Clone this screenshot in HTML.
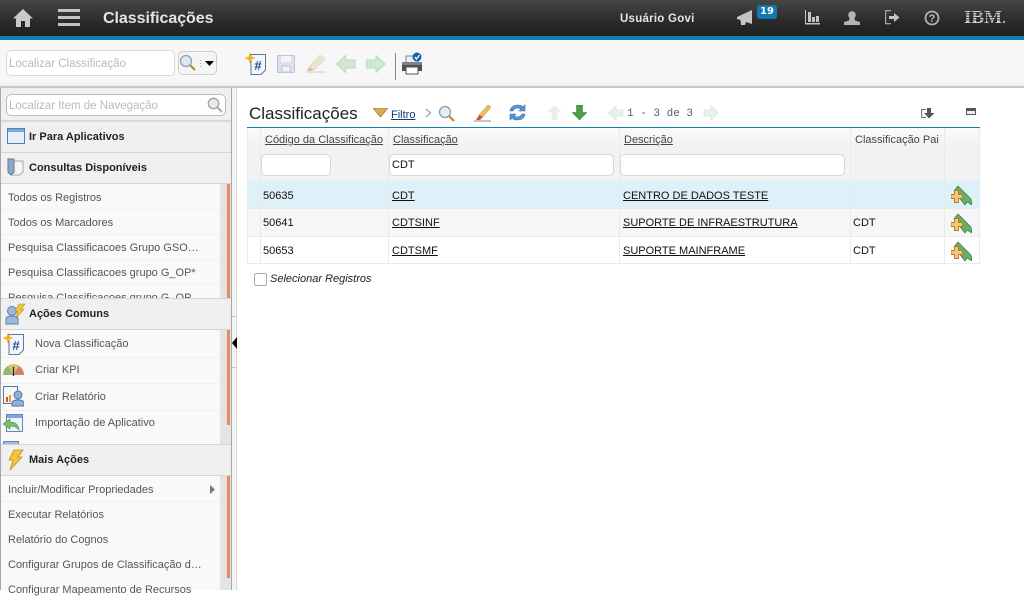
<!DOCTYPE html>
<html><head><meta charset="utf-8"><style>
html,body{margin:0;padding:0;width:1024px;height:590px;overflow:hidden;background:#fff;font-family:"Liberation Sans",sans-serif;font-size:11px;color:#333}
.a,.t,svg{position:absolute}
.t{white-space:nowrap;line-height:14px}
.nav{color:#555;left:8px;margin-top:1px}
.nav2{color:#555;left:35px;margin-top:1px}
.h{font-weight:bold;color:#222;left:29px;margin-top:1px}
.r{background:#eee;height:1px}
.d{color:#111;margin-top:1px}
.u{text-decoration:underline}
.th{color:#444;margin-top:1px}
.inp{background:#fff;border:1px solid #d8d8d8;border-radius:5px;box-sizing:border-box}
.v{background:#eaeaea;width:1px}
</style></head><body>
<svg width="0" height="0"><defs>
<g id="add"><path d="M3 6L7 1L20 14L21 20L16 17L14 20Z" fill="#6aae6a" stroke="#2f7a3a" stroke-width=".7"/><path d="M3.500 5.500h4v4h4v4h-4v4h-4v-4h-3.500v-4h3.500z" fill="#f5c878" stroke="#b8792a" stroke-width=".9"/></g>
</defs></svg>

<!-- header -->
<div class="a" style="left:0;top:0;width:1024px;height:36px;background:linear-gradient(#464646,#262626 70%,#222)"></div>
<div class="a" style="left:0;top:36px;width:1024px;height:4px;background:#0f7fb0"></div>
<svg style="left:13px;top:8px" width="20" height="20"><path d="M10 1L20 10.500H17V19H12V13H8V19H3V10.500H0Z" fill="#c9c9c9"/></svg>
<div class="a" style="left:58px;top:9px;width:22px;height:3px;background:#c4c4c4"></div>
<div class="a" style="left:58px;top:16px;width:22px;height:3px;background:#c4c4c4"></div>
<div class="a" style="left:58px;top:23px;width:22px;height:3px;background:#c4c4c4"></div>
<div class="t" style="left:103px;top:10px;font-size:16px;line-height:18px;font-weight:bold;color:#e4e4e4;letter-spacing:-.05px">Classificações</div>
<div class="t" style="left:620px;top:12px;font-size:11.500px;font-weight:bold;color:#e4e4e4;letter-spacing:.25px">Usuário Govi</div>
<svg style="left:737px;top:9px" width="17" height="16"><path d="M0 8L15 1V15L9 13L8 16H4L3.500 11L0 10Z" fill="#c4c4c4"/></svg>
<div class="a" style="left:757px;top:5px;width:20px;height:14px;background:#1277b5;border-radius:3px;color:#fff;font:bold 10px/13px 'DejaVu Sans',sans-serif;text-align:center">19</div>
<svg style="left:805px;top:10px" width="15" height="15" fill="#c4c4c4"><path d="M0 0H1V13H15V14.500H0Z"/><rect x="3" y="2" width="3" height="10"/><rect x="7" y="7" width="3" height="5"/><rect x="11" y="6" width="3" height="6"/></svg>
<svg style="left:844px;top:11px" width="16" height="14" fill="#b4b4b4"><circle cx="8" cy="4" r="3.800"/><path d="M5.500 7H10.500L11 9.500L16 11V14H0V11L5 9.500Z"/></svg>
<svg style="left:885px;top:10px" width="15" height="15" fill="none" stroke="#c4c4c4"><path d="M6 .7H.7V13.800H6"/><path d="M4 6H9V3L14.500 7.500L9 12V9H4Z" fill="#c4c4c4" stroke="none"/></svg>
<svg style="left:924px;top:10px" width="16" height="16"><circle cx="8" cy="8" r="6.500" fill="none" stroke="#b4b4b4" stroke-width="1.800"/><text x="8" y="12" font-size="11" font-weight="bold" fill="#b4b4b4" text-anchor="middle" font-family="Liberation Sans">?</text></svg>
<svg style="left:964px;top:9px" width="44" height="16"><text x="0" y="14" font-family="Liberation Serif" font-weight="bold" font-size="18" textLength="38" lengthAdjust="spacingAndGlyphs" fill="#d0d0d0">IBM</text><g fill="#2a2a2a"><rect y="3" width="40" height=".8"/><rect y="5.500" width="40" height=".8"/><rect y="8" width="40" height=".8"/><rect y="10.500" width="40" height=".8"/></g><circle cx="40" cy="13" r="1.200" fill="#aaa"/></svg>

<!-- toolbar -->
<div class="a" style="left:0;top:40px;width:1024px;height:42px;background:#f7f7f7"></div>
<div class="a" style="left:0;top:82px;width:1024px;height:4px;background:#f0f0f0"></div>
<div class="a" style="left:0;top:86px;width:1024px;height:2px;background:#c8c8c8"></div>
<div class="a inp" style="left:6px;top:50px;width:169px;height:26px"></div>
<div class="t" style="left:9px;top:57px;color:#b8b8b8;font-size:11.500px">Localizar Classificação</div>
<div class="a inp" style="left:178px;top:51px;width:39px;height:24px;background:#f5f5f5;border-color:#ccc"></div>
<svg style="left:179px;top:54px" width="17" height="17"><circle cx="7" cy="7" r="5.500" fill="#dbe8f5" stroke="#8fa3b3" stroke-width="1.300"/><path d="M11 11L16 16" stroke="#b8893a" stroke-width="2.200"/></svg>
<div class="a" style="left:200px;top:60px;width:1px;height:7px;background:repeating-linear-gradient(#aaa 0 1px,transparent 1px 3px)"></div>
<svg style="left:205px;top:61px" width="10" height="6"><path d="M0 0H9L4.500 5Z" fill="#000"/></svg>
<!-- new -->
<svg style="left:245px;top:53px" width="22" height="22"><path d="M6 1.500H20.500V17L16 21.500H6Z" fill="#f4f6fb" stroke="#5f7694"/><text x="13" y="17" font-family="Liberation Sans" font-size="13" font-weight="bold" fill="#1e4f99" text-anchor="middle">#</text><circle cx="5" cy="5" r="3" fill="#f8d030"/><path d="M5 0V10M0 5H10" stroke="#e8a010"/></svg>
<!-- save disabled -->
<svg style="left:277px;top:55px" width="18" height="18"><rect x=".5" y=".5" width="17" height="17" fill="#dbe1ea" stroke="#bcc6d3"/><rect x="4" y="1" width="10" height="6" fill="#f3f4f7"/><rect x="5" y="11" width="8" height="6" fill="#f3f4f7" stroke="#bcc6d3"/></svg>
<!-- eraser disabled -->
<svg style="left:305px;top:53px" width="22" height="20"><path d="M4 14L15 2L20 6L9 17Z" fill="#f0e3c8" stroke="#ddd"/><path d="M4 14L9 17L6 18H2Z" fill="#dcb9a8"/><path d="M1 19H21" stroke="#c9ccd6"/></svg>
<svg style="left:336px;top:54px" width="20" height="20" fill="#cfe8cf" stroke="#b6dcb6"><path d="M.7 10L9.500 1.500V6H19V14H9.500V18.500Z"/></svg>
<svg style="left:366px;top:54px" width="20" height="20" fill="#cfe8cf" stroke="#b6dcb6"><path d="M19 10L10 1.500V6H.7V14H10V18.500Z"/></svg>
<div class="a" style="left:395px;top:53px;width:1px;height:27px;background:#8a8a80"></div>
<svg style="left:401px;top:52px" width="22" height="23"><rect x="5" y="4" width="12" height="8" fill="#eee" stroke="#888"/><path d="M1 10H21V19H1Z" fill="#4c5159"/><rect x="1" y="10" width="20" height="3" fill="#7d8289"/><rect x="5" y="15" width="12" height="7" fill="#fff" stroke="#555"/><circle cx="16" cy="5" r="4.500" fill="#1360b0"/><path d="M14 5L15.500 7L18.500 3" stroke="#fff" fill="none" stroke-width="1.300"/></svg>

<!-- left nav -->
<div class="a" style="left:0;top:88px;width:232px;height:502px;background:#f9f9f9;border:1px solid #a8a8a8;border-width:0 1px;box-sizing:border-box"></div>
<div class="a" style="left:1px;top:88px;width:230px;height:33px;background:#f0f0f0"></div>
<div class="a inp" style="left:6px;top:94px;width:220px;height:22px;border-color:#bbb"></div>
<div class="t" style="left:9px;top:99px;color:#bbb;font-size:11.500px">Localizar Item de Navegação</div>
<svg style="left:207px;top:97px" width="16" height="16"><circle cx="6.500" cy="6.500" r="5.200" fill="#e8e8e8" stroke="#a0a0a0" stroke-width="1.300"/><path d="M10.500 10.500L15 15" stroke="#aaa" stroke-width="2"/></svg>

<div class="a" style="left:1px;top:121px;width:230px;height:62px;background:#f0f0f0"></div>
<div class="a" style="left:1px;top:120px;width:230px;height:2px;background:#d8d8d8"></div>
<div class="a" style="left:1px;top:152px;width:230px;height:1px;background:#d4d4d4"></div>
<div class="a" style="left:1px;top:183px;width:230px;height:1px;background:#d4d4d4"></div>
<svg style="left:7px;top:128px" width="19" height="18"><rect x=".5" y=".5" width="17" height="15" fill="#e6eefa" stroke="#4f7fb5"/><rect x="1" y="1" width="16" height="3" fill="#7ea8d8"/></svg>
<div class="t h" style="top:129px">Ir Para Aplicativos</div>
<svg style="left:6px;top:158px" width="19" height="20"><path d="M6 3H17V14L14 17H6Z" fill="#f5f5f5" stroke="#a8a8a8"/><path d="M2 1H8V14L5 17L2 14Z" fill="#8ea8c4" stroke="#5f7d9e"/></svg>
<div class="t h" style="top:160px">Consultas Disponíveis</div>

<div class="a" style="left:220px;top:184px;width:11px;height:114px;background:#e4e4e4"></div>
<div class="a" style="left:227px;top:184px;width:3px;height:114px;background:#e88a60"></div>
<div class="t nav" style="top:190px">Todos os Registros</div>
<div class="t nav" style="top:215px">Todos os Marcadores</div>
<div class="t nav" style="top:240px">Pesquisa Classificacoes Grupo GSO…</div>
<div class="t nav" style="top:265px">Pesquisa Classificacoes grupo G_OP*</div>
<div class="t nav" style="top:290px">Pesquisa Classificacoes grupo G_OP…</div>
<div class="a r" style="left:1px;top:209px;width:219px;background:#f0f0f0"></div>
<div class="a r" style="left:1px;top:234px;width:219px;background:#f0f0f0"></div>
<div class="a r" style="left:1px;top:259px;width:219px;background:#f0f0f0"></div>
<div class="a r" style="left:1px;top:284px;width:219px;background:#f0f0f0"></div>

<div class="a" style="left:1px;top:298px;width:230px;height:32px;background:#f0f0f0;border-top:1px solid #d4d4d4;border-bottom:1px solid #d4d4d4;box-sizing:border-box"></div>
<svg style="left:5px;top:303px" width="22" height="22"><circle cx="7" cy="8" r="4.500" fill="#9db8d8" stroke="#5f7fa5"/><path d="M1 21V16Q1 13 7 13Q13 13 13 16V21Z" fill="#9db8d8" stroke="#5f7fa5"/><path d="M14 1H20L16 6H19L11 15L13 8H10Z" fill="#f2c440" stroke="#c48a18" stroke-width=".6"/></svg>
<div class="t h" style="top:306px">Ações Comuns</div>

<div class="a" style="left:220px;top:330px;width:11px;height:114px;background:#e4e4e4"></div>
<div class="a" style="left:227px;top:330px;width:3px;height:95px;background:#e88a60"></div>
<svg style="left:3px;top:333px" width="22" height="22"><path d="M6 1.500H20.500V17L16 21.500H6Z" fill="#f4f6fb" stroke="#5f7694"/><text x="13" y="17" font-family="Liberation Sans" font-size="13" font-weight="bold" fill="#1e4f99" text-anchor="middle">#</text><circle cx="5" cy="5" r="3" fill="#f8d030"/><path d="M5 0V10M0 5H10" stroke="#e8a010"/></svg>
<div class="t nav2" style="top:336px">Nova Classificação</div>
<svg style="left:3px;top:362px" width="21" height="14"><path d="M0 13A10.500 11 0 0 1 21 13Z" fill="#d8c070"/><path d="M0 13A10.500 11 0 0 1 5 4L10.500 13Z" fill="#8fb878"/><path d="M21 13A10.500 11 0 0 0 16 4L10.500 13Z" fill="#d88070"/><path d="M10.500 5V14" stroke="#222" stroke-width="1.200"/></svg>
<div class="t nav2" style="top:362px">Criar KPI</div>
<svg style="left:3px;top:386px" width="21" height="21"><rect x=".5" y=".5" width="14" height="17" fill="#f4f6fb" stroke="#5f7694"/><rect x="3" y="11" width="2" height="5" fill="#d85030"/><rect x="6" y="9" width="2" height="7" fill="#e8a020"/><circle cx="15" cy="9" r="4" fill="#8fb0d8" stroke="#4f75a5"/><path d="M9 20V17Q9 14 15 14Q21 14 21 17V20Z" fill="#8fb0d8" stroke="#4f75a5"/></svg>
<div class="t nav2" style="top:389px">Criar Relatório</div>
<svg style="left:3px;top:414px" width="21" height="20"><rect x="3.500" y=".5" width="16" height="17" fill="#eef4fb" stroke="#5f8ab5"/><rect x="4" y="1" width="15" height="3" fill="#7ea8d8"/><path d="M0 10L7 5V8Q15 8 16 16Q13 12 7 12V15Z" fill="#7cbc6c" stroke="#4a8a48" stroke-width=".6"/></svg>
<div class="t nav2" style="top:415px">Importação de Aplicativo</div>
<div class="a" style="left:3px;top:441px;width:16px;height:3px;background:#9fbce0;border:1px solid #5f8ab5;border-bottom:0;box-sizing:border-box"></div>
<div class="a r" style="left:1px;top:357px;width:219px;background:#f0f0f0"></div>
<div class="a r" style="left:1px;top:383px;width:219px;background:#f0f0f0"></div>
<div class="a r" style="left:1px;top:410px;width:219px;background:#f0f0f0"></div>

<div class="a" style="left:1px;top:444px;width:230px;height:32px;background:#f0f0f0;border-top:1px solid #d4d4d4;border-bottom:1px solid #d4d4d4;box-sizing:border-box"></div>
<svg style="left:8px;top:449px" width="16" height="22"><path d="M6 1H15L10 8H14L2 21L5 11H1Z" fill="#f2c440" stroke="#c48a18" stroke-width=".8"/></svg>
<div class="t h" style="top:452px">Mais Ações</div>

<div class="a" style="left:220px;top:476px;width:11px;height:114px;background:#e4e4e4"></div>
<div class="a" style="left:227px;top:476px;width:3px;height:102px;background:#e88a60"></div>
<div class="t nav" style="top:482px">Incluir/Modificar Propriedades</div>
<svg style="left:210px;top:485px" width="5" height="9"><path d="M0 0L5 4.500L0 9Z" fill="#777"/></svg>
<div class="t nav" style="top:507px">Executar Relatórios</div>
<div class="t nav" style="top:532px">Relatório do Cognos</div>
<div class="t nav" style="top:557px">Configurar Grupos de Classificação d…</div>
<div class="t nav" style="top:582px">Configurar Mapeamento de Recursos</div>
<div class="a r" style="left:1px;top:501px;width:219px;background:#f0f0f0"></div>

<!-- splitter -->
<div class="a" style="left:232px;top:88px;width:5px;height:502px;background:#f4f4f4;border-right:1px solid #d8d8d8;box-sizing:border-box"></div>
<div class="a r" style="left:232px;top:316px;width:5px;background:#c8c8c8"></div>
<div class="a r" style="left:232px;top:367px;width:5px;background:#c8c8c8"></div>
<svg style="left:232px;top:337px" width="5" height="12"><path d="M0 6L5 0V12Z" fill="#000"/></svg>

<!-- main -->
<div class="t" style="left:249px;top:104px;font-size:17px;line-height:19px;color:#222">Classificações</div>
<svg style="left:373px;top:108px" width="15" height="10"><path d="M0 0H15L7.500 9Z" fill="#e0a850" stroke="#8a6a30" stroke-width=".6"/></svg>
<div class="t u" style="left:391px;top:108px;color:#123a70">Filtro</div>
<svg style="left:425px;top:108px" width="7" height="10"><path d="M1 1L5.500 5L1 9" fill="none" stroke="#aaa" stroke-width="1.500"/></svg>
<svg style="left:438px;top:105px" width="17" height="17"><circle cx="7" cy="7" r="5.500" fill="#e4eef6" stroke="#8f9ca6" stroke-width="1.300"/><path d="M11 11L16 16" stroke="#b8893a" stroke-width="2.200"/></svg>
<svg style="left:474px;top:104px" width="18" height="18"><path d="M5 11L14 1L17 3L9 13Z" fill="#e8c068" stroke="#b08030" stroke-width=".5"/><path d="M5 11L9 13L6 16H2Z" fill="#c85a40"/><path d="M0 17H17" stroke="#888"/></svg>
<svg style="left:509px;top:104px" width="17" height="17" fill="#5a94d4" stroke="#2f6aa8" stroke-width=".6"><path d="M1 7Q2 1 9 1Q12 1 14 3L16 1V7H10L12 5Q10 4 9 4Q5 4 4 7Z"/><path d="M16 10Q15 16 8 16Q5 16 3 14L1 16V10H7L5 12Q7 13 8 13Q12 13 13 10Z"/></svg>
<svg style="left:547px;top:105px" width="15" height="15"><path d="M7.500 0L15 7.500H10.500V15H4.500V7.500H0Z" fill="#e4f1e4"/></svg>
<svg style="left:572px;top:105px" width="15" height="15"><path d="M7.500 15L15 7.500H10.500V0H4.500V7.500H0Z" fill="#4aa04a" stroke="#2f7a2f" stroke-width=".5"/></svg>
<svg style="left:608px;top:105px" width="16" height="16" fill="#e8f3e8" stroke="#dceadc"><path d="M.7 8L8 1V5H15V11H8V15Z"/></svg>
<div class="t" style="left:627px;top:107px;font:11px/14px 'Liberation Mono',monospace;color:#506080">1 - 3 de 3</div>
<svg style="left:703px;top:105px" width="16" height="16" fill="#e8f3e8" stroke="#dceadc"><path d="M15 8L8 1V5H1V11H8V15Z"/></svg>
<svg style="left:921px;top:108px" width="14" height="11"><path d="M5 1.500H.7V9.500H5" fill="none" stroke="#666"/><path d="M6 0H10V5H13.500L8 10.500L3 5H6Z" fill="#555"/></svg>
<div class="a" style="left:966px;top:108px;width:10px;height:7px;background:#eee;border:1px solid #555;border-top-width:3px;box-sizing:border-box"></div>

<!-- table -->
<div class="a" style="left:247px;top:128px;width:733px;height:24px;background:linear-gradient(#fafafa,#f0f0f0)"></div>
<div class="a" style="left:247px;top:151px;width:733px;height:29px;background:#f2f2f2"></div>
<div class="a" style="left:247px;top:180px;width:733px;height:28px;background:#def1f8"></div>
<div class="a" style="left:247px;top:208px;width:733px;height:28px;background:#f6f6f6"></div>
<div class="a" style="left:247px;top:208px;width:733px;height:1px;background:#eaeaea"></div>
<div class="a" style="left:247px;top:236px;width:733px;height:1px;background:#eaeaea"></div>
<div class="a" style="left:247px;top:263px;width:733px;height:1px;background:#eaeaea"></div>
<div class="a v" style="left:247px;top:128px;height:136px"></div>
<div class="a v" style="left:260px;top:128px;height:136px"></div>
<div class="a v" style="left:388px;top:128px;height:136px"></div>
<div class="a v" style="left:619px;top:128px;height:136px"></div>
<div class="a v" style="left:850px;top:128px;height:136px"></div>
<div class="a v" style="left:944px;top:128px;height:136px"></div>
<div class="a v" style="left:979px;top:128px;height:136px"></div>
<div class="a" style="left:247px;top:127px;width:733px;height:1px;background:#0f7fb0"></div>

<div class="t u th" style="left:265px;top:132px">Código da Classificação</div>
<div class="t u th" style="left:393px;top:132px">Classificação</div>
<div class="t u th" style="left:624px;top:132px">Descrição</div>
<div class="t th" style="left:855px;top:132px">Classificação Pai</div>

<div class="a inp" style="left:261px;top:154px;width:70px;height:22px"></div>
<div class="a inp" style="left:389px;top:154px;width:225px;height:22px"></div>
<div class="a inp" style="left:620px;top:154px;width:225px;height:22px"></div>
<div class="t d" style="left:392px;top:157px">CDT</div>

<div class="t d" style="left:263px;top:188px">50635</div>
<div class="t d u" style="left:392px;top:188px">CDT</div>
<div class="t d u" style="left:623px;top:188px">CENTRO DE DADOS TESTE</div>
<div class="t d" style="left:263px;top:215px">50641</div>
<div class="t d u" style="left:392px;top:215px">CDTSINF</div>
<div class="t d u" style="left:623px;top:215px">SUPORTE DE INFRAESTRUTURA</div>
<div class="t d" style="left:853px;top:215px">CDT</div>
<div class="t d" style="left:263px;top:243px">50653</div>
<div class="t d u" style="left:392px;top:243px">CDTSMF</div>
<div class="t d u" style="left:623px;top:243px">SUPORTE MAINFRAME</div>
<div class="t d" style="left:853px;top:243px">CDT</div>

<svg style="left:951px;top:185px" width="21" height="21"><use href="#add"/></svg>
<svg style="left:951px;top:213px" width="21" height="21"><use href="#add"/></svg>
<svg style="left:951px;top:241px" width="21" height="21"><use href="#add"/></svg>

<div class="a" style="left:254px;top:273px;width:13px;height:13px;background:#fff;border:1px solid #aaa;border-radius:2px;box-sizing:border-box"></div>
<div class="t" style="left:270px;top:272px;font-style:italic;color:#222;margin-top:0">Selecionar Registros</div>
</body></html>
